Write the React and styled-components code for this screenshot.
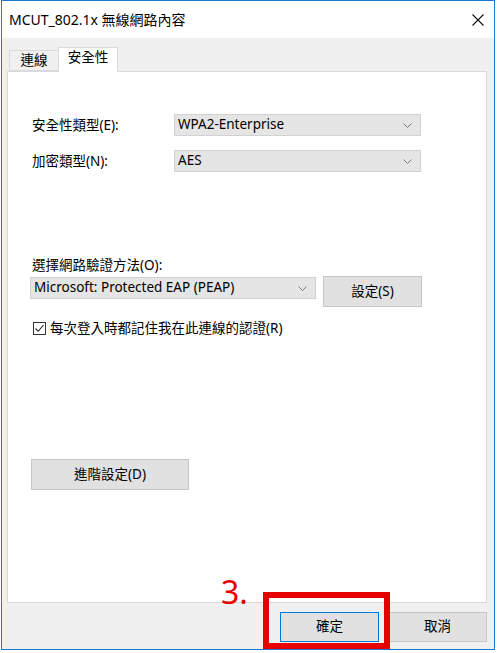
import styled, { createGlobalStyle } from "styled-components";

const GlobalStyle = createGlobalStyle`
  html, body {
    margin: 0;
    padding: 0;
    background: #ffffff;
  }
  body {
    font-family: "Noto Sans", "Noto Sans CJK TC", sans-serif;
    font-size: 13.5px;
    color: #000;
  }
`;

const Page = styled.div`
  position: relative;
  width: 502px;
  height: 653px;
  padding-left: 1px;
  box-sizing: border-box;
`;

const Window = styled.div`
  width: 494px;
  height: 650px;
  box-sizing: border-box;
  border: 1px solid #1a7ad8;
  display: flex;
  flex-direction: column;
  background: #f0f0f0;
`;

const TitleBar = styled.div`
  height: 37px;
  flex: none;
  background: #fff;
  display: flex;
  align-items: center;
  justify-content: space-between;
  padding: 0 10px 0 7px;
  font-size: 14px;
  line-height: 1;
`;

const Body = styled.div`
  flex: 1;
  display: flex;
  flex-direction: column;
  padding: 9px 7px 0 5px;
`;

const TabStrip = styled.div`
  height: 24px;
  display: flex;
  align-items: flex-end;
  padding-left: 2px;
`;

const Tab = styled.div`
  box-sizing: border-box;
  height: ${(p) => (p.$active ? "25px" : "21px")};
  margin-bottom: ${(p) => (p.$active ? "-1px" : "0")};
  width: ${(p) => p.$w}px;
  margin-left: ${(p) => (p.$active ? "-1px" : "0")};
  background: ${(p) => (p.$active ? "#fff" : "#f0f0f0")};
  border: 1px solid #d9d9d9;
  border-bottom: ${(p) => (p.$active ? "none" : "1px solid #d9d9d9")};
  position: relative;
  z-index: ${(p) => (p.$active ? 1 : 0)};
  display: flex;
  justify-content: center;
  align-items: ${(p) => (p.$active ? "flex-start" : "center")};
  padding-top: ${(p) => (p.$active ? "3px" : "1px")};
  line-height: 1;
`;

const Panel = styled.div`
  height: 532px;
  box-sizing: border-box;
  background: #fff;
  border: 1px solid #d9d9d9;
  display: flex;
  flex-direction: column;
  padding: 42px 0 0 22px;
`;

const FieldRow = styled.div`
  display: flex;
  align-items: ${(p) => (p.$top ? "flex-start" : "center")};
  margin-top: ${(p) => p.$mt || 0}px;
`;

const Label = styled.div`
  width: ${(p) => (p.$w ? p.$w + "px" : "auto")};
  margin-left: 2px;
  line-height: 18px;
  flex: none;
`;

const Select = styled.div`
  box-sizing: border-box;
  width: ${(p) => p.$w}px;
  height: 22px;
  background: #e5e5e5;
  border: 1px solid #d2d2d2;
  display: flex;
  align-items: center;
  justify-content: space-between;
  padding: 0 8px 0 3px;
  margin-top: ${(p) => p.$mt || 0}px;
  flex: none;
  line-height: 1;
`;

const Button = styled.div`
  box-sizing: border-box;
  width: ${(p) => p.$w}px;
  height: ${(p) => p.$h || 31}px;
  background: #e1e1e1;
  border: 1px solid ${(p) => (p.$focus ? "#0078d7" : "#c6c6c6")};
  display: flex;
  align-items: center;
  justify-content: center;
  margin-left: ${(p) => p.$ml || 0}px;
  flex: none;
  line-height: 1;
`;

const CheckRow = styled.div`
  display: flex;
  align-items: center;
  gap: 4px;
  margin: 12px 0 0 3px;
  line-height: 18px;
`;

const Box = styled.div`
  width: 13px;
  height: 13px;
  box-sizing: border-box;
  border: 1px solid #333;
  background: #fff;
  display: flex;
  align-items: center;
  justify-content: center;
`;

const Footer = styled.div`
  flex: 1;
  display: flex;
  justify-content: flex-end;
  gap: 9px;
  padding-top: 9px;
`;

const RedBox = styled.div`
  position: absolute;
  left: 263px;
  top: 592px;
  width: 127px;
  height: 57px;
  box-sizing: border-box;
  border: 6px solid #e60000;
`;

const StepNumber = styled.div`
  position: absolute;
  left: 221px;
  top: 574px;
  font-family: "Noto Sans", sans-serif;
  font-size: 32px;
  font-weight: 400;
  line-height: 1.1;
  color: #e60000;
`;

function Chevron() {
  return (
    <svg width="9" height="5" viewBox="0 0 9 5">
      <path d="M0.5 0.5 L4.5 4.5 L8.5 0.5" fill="none" stroke="#7a7a7a" strokeWidth="1" />
    </svg>
  );
}

function CloseIcon() {
  return (
    <svg width="12" height="12" viewBox="0 0 12 12">
      <path d="M0.5 0.5 L11.5 11.5 M11.5 0.5 L0.5 11.5" stroke="#111" strokeWidth="1.1" />
    </svg>
  );
}

export default function App() {
  return (
    <>
      <GlobalStyle />
      <Page>
        <Window>
          <TitleBar>
            <span>MCUT_802.1x 無線網路內容</span>
            <CloseIcon />
          </TitleBar>
          <Body>
            <TabStrip>
              <Tab $w={50}>連線</Tab>
              <Tab $w={60} $active>安全性</Tab>
            </TabStrip>
            <Panel>
              <FieldRow>
                <Label $w={142}>安全性類型(E):</Label>
                <Select $w={247}>
                  <span>WPA2-Enterprise</span>
                  <Chevron />
                </Select>
              </FieldRow>
              <FieldRow $mt={14}>
                <Label $w={142}>加密類型(N):</Label>
                <Select $w={247}>
                  <span>AES</span>
                  <Chevron />
                </Select>
              </FieldRow>
              <FieldRow $mt={84}>
                <Label>選擇網路驗證方法(O):</Label>
              </FieldRow>
              <FieldRow $mt={2} $top>
                <Select $w={286} $mt={1}>
                  <span>Microsoft: Protected EAP (PEAP)</span>
                  <Chevron />
                </Select>
                <Button $w={99} $ml={7}>設定(S)</Button>
              </FieldRow>
              <CheckRow>
                <Box>
                  <svg width="11" height="11" viewBox="0 0 11 11">
                    <path d="M1.5 5.5 L4.2 8.3 L9.5 2" fill="none" stroke="#222" strokeWidth="1.1" />
                  </svg>
                </Box>
                <span>每次登入時都記住我在此連線的認證(R)</span>
              </CheckRow>
              <FieldRow $mt={122}>
                <Button $w={158} $ml={1}>進階設定(D)</Button>
              </FieldRow>
            </Panel>
            <Footer>
              <Button $w={99} $h={30} $focus>確定</Button>
              <Button $w={99} $h={30}>取消</Button>
            </Footer>
          </Body>
        </Window>
        <StepNumber>3.</StepNumber>
        <RedBox />
      </Page>
    </>
  );
}
